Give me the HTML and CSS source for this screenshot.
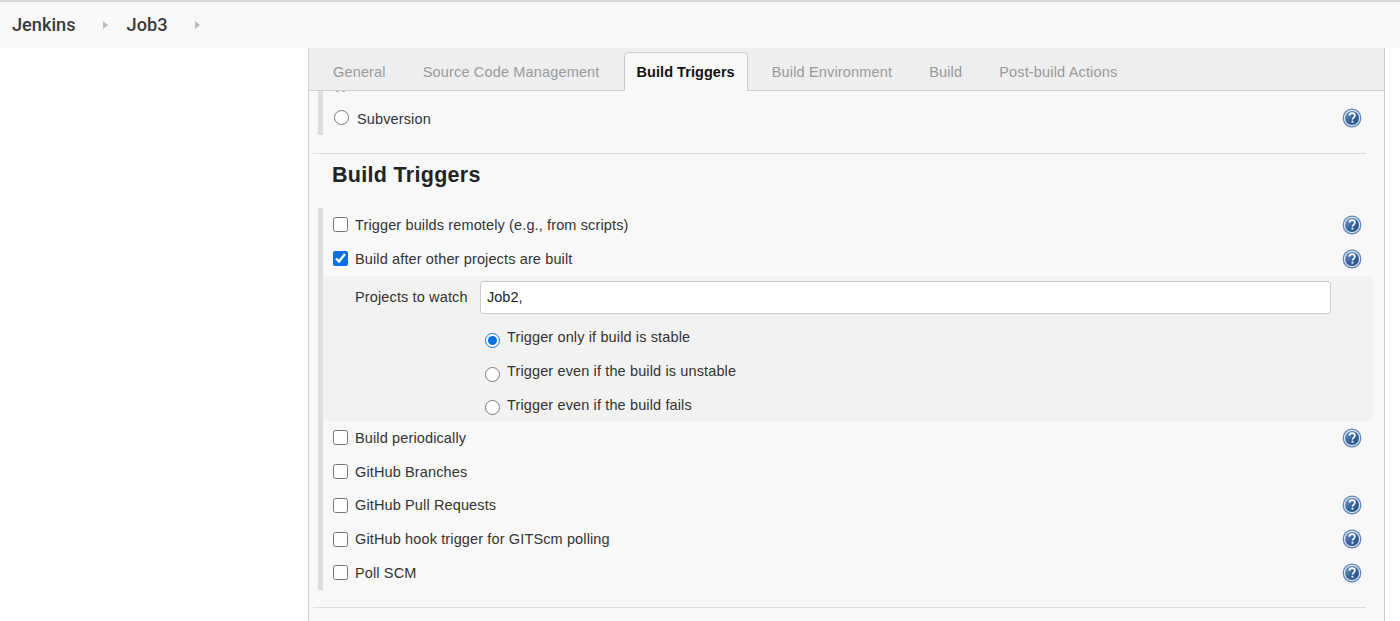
FILE: index.html
```html
<!DOCTYPE html>
<html lang="en">
<head>
<meta charset="utf-8">
<title>Job3 Config</title>
<link rel="stylesheet" href="styles.css">
</head>
<body>
<svg class="defs" width="0" height="0" aria-hidden="true">
  <defs>
    <linearGradient id="hg" x1="0" y1="0" x2="1" y2="1">
      <stop offset="0" stop-color="#7f9fc8"/>
      <stop offset="0.55" stop-color="#2f5f9c"/>
      <stop offset="1" stop-color="#2a4f86"/>
    </linearGradient>
    <symbol id="help" viewBox="0 0 20 20">
      <circle cx="10" cy="10" r="9.4" fill="#5f83b3"/>
      <circle cx="10" cy="10" r="8.2" fill="#dfe8f2"/>
      <circle cx="10" cy="10" r="7" fill="url(#hg)"/>
      <path d="M7.3 7.6c.2-1.6 1.3-2.4 2.8-2.4 1.6 0 2.8 1 2.8 2.4 0 1.1-.6 1.7-1.4 2.3-.7.5-1 .9-1 1.7" fill="none" stroke="#fff" stroke-width="1.7"/>
      <rect x="9.5" y="12.7" width="1.9" height="1.9" fill="#fff"/>
    </symbol>
  </defs>
</svg>
<header class="topbar">
  <a class="crumb">Jenkins</a><span class="arrow"></span>
  <a class="crumb">Job3</a><span class="arrow"></span>
</header>
<div class="layout">
  <aside class="sidebar"></aside>
  <main class="panel">
    <nav class="tabs">
      <span class="tab">General</span>
      <span class="tab">Source Code Management</span>
      <span class="tab active">Build Triggers</span>
      <span class="tab">Build Environment</span>
      <span class="tab">Build</span>
      <span class="tab">Post-build Actions</span>
    </nav>
    <section class="scm group">
      <div class="clip"><input type="radio" name="scm"></div>
      <div class="row radio-row">
        <label class="opt"><input type="radio" name="scm"><span>Subversion</span></label>
        <svg class="help"><use href="#help"/></svg>
      </div>
    </section>
    <hr class="sep first">
    <h2 class="title">Build Triggers</h2>
    <section class="group triggers">
      <div class="row">
        <label class="opt"><input type="checkbox"><span>Trigger builds remotely (e.g., from scripts)</span></label>
        <svg class="help"><use href="#help"/></svg>
      </div>
      <div class="row">
        <label class="opt"><input type="checkbox" checked><span>Build after other projects are built</span></label>
        <svg class="help"><use href="#help"/></svg>
      </div>
      <div class="nested">
        <div class="watch">
          <span class="watch-label">Projects to watch</span>
          <input class="text" type="text" value="Job2,">
        </div>
        <label class="sub"><input type="radio" name="t" checked><span>Trigger only if build is stable</span></label>
        <label class="sub"><input type="radio" name="t"><span>Trigger even if the build is unstable</span></label>
        <label class="sub"><input type="radio" name="t"><span>Trigger even if the build fails</span></label>
      </div>
      <div class="row">
        <label class="opt"><input type="checkbox"><span>Build periodically</span></label>
        <svg class="help"><use href="#help"/></svg>
      </div>
      <div class="row">
        <label class="opt"><input type="checkbox"><span>GitHub Branches</span></label>
      </div>
      <div class="row">
        <label class="opt"><input type="checkbox"><span>GitHub Pull Requests</span></label>
        <svg class="help"><use href="#help"/></svg>
      </div>
      <div class="row">
        <label class="opt"><input type="checkbox"><span>GitHub hook trigger for GITScm polling</span></label>
        <svg class="help"><use href="#help"/></svg>
      </div>
      <div class="row">
        <label class="opt"><input type="checkbox"><span>Poll SCM</span></label>
        <svg class="help"><use href="#help"/></svg>
      </div>
    </section>
    <hr class="sep last">
  </main>
</div>
</body>
</html>
```
FILE: styles.css
```css
* { box-sizing: border-box; }
html, body { margin: 0; height: 621px; overflow: hidden; background: #fff; }
body { font-family: "Liberation Sans", Arial, sans-serif; font-size: 14px; color: #333; }
.defs { position: absolute; }
.topbar {
  height: 48px;
  border-top: 2px solid #d6d6d6;
  background: #f8f8f8;
  display: flex;
  align-items: center;
  padding-left: 12px;
  padding-bottom: 1px;
}
.crumb { font-family: Roboto, sans-serif; font-weight: 500; font-size: 18.2px; color: #3a3a3a; }
.arrow {
  width: 0; height: 0;
  margin: 0 19px 0 27px;
  border-left: 5px solid #bbb;
  border-top: 4px solid transparent;
  border-bottom: 4px solid transparent;
}
.layout { display: flex; height: 573px; }
.sidebar { width: 308px; flex: none; background: #fff; }
.panel {
  width: 1077px;
  flex: none;
  background: #f8f8f8;
  border-left: 1px solid #ccc;
  border-right: 1px solid #ccc;
  padding-left: 5px;
  overflow: hidden;
}
.tabs {
  display: flex;
  align-items: flex-end;
  height: 43px;
  margin-left: -5px;
  padding-left: 11px;
  background: #eee;
  border-bottom: 1px solid #ccc;
  position: relative;
  z-index: 1;
  gap: 11px;
}
.tab {
  height: 39px;
  margin-bottom: -1px;
  padding: 0 12px 1px;
  display: flex;
  align-items: center;
  font-size: 14.5px;
  letter-spacing: 0.16px;
  color: #999;
  white-space: nowrap;
  border: 1px solid transparent;
  border-bottom: 0;
}
.tab.active {
  background: #f8f8f8;
  border-color: #ccc;
  border-radius: 5px 5px 0 0;
  font-weight: 700;
  color: #111;
  letter-spacing: 0.05px;
}
.group { margin-left: 4px; border-left: 5px solid #ddd; }
.scm { height: 44px; }
.clip { height: 1px; overflow: hidden; position: relative; }
.clip input { position: absolute; left: 10px; top: -13px; margin: 0; width: 15px; height: 15px; }
.row {
  height: 33.75px;
  display: flex;
  align-items: center;
  justify-content: space-between;
  padding-left: 10px;
  padding-right: 13.5px;
  width: 1052px;
}
.radio-row { margin-top: 9px; }
.opt { display: flex; align-items: center; letter-spacing: 0.13px; font-size: 14.5px; }
.opt input { margin: 0 7px 0 0; width: 15px; height: 15px; accent-color: #0a6fe0; flex: none; }
.radio-row .opt input { margin: 0 8px 0 1px; }
.radio-row .opt span { padding-top: 2px; }
.help { width: 20px; height: 20px; flex: none; }
.sep { border: 0; border-top: 1px solid #ddd; margin: 0 0 0 -1px; width: 1053px; }
.sep.first { margin-top: 18px; }
.sep.last { margin-top: 17px; }
.title { margin: 0; height: 54px; padding: 7px 0 0 18px; font-size: 21.5px; line-height: 28px; letter-spacing: 0.3px; color: #222; font-weight: 700; }
.triggers { height: 382px; }
.nested {
  background: #f2f2f2;
  width: 1050px;
  height: 145.6px;
  padding-top: 5px;
}
.watch { display: flex; align-items: center; height: 33px; padding-left: 32px; margin-bottom: 7px; }
.watch-label { width: 125px; flex: none; font-size: 14.5px; letter-spacing: 0.13px; }
.text {
  width: 851px;
  height: 33px;
  border: 1px solid #ccc;
  border-radius: 3px;
  background: #fff;
  padding: 0 6px;
  font: 14.5px "Liberation Sans", Arial, sans-serif;
  color: #222;
}
.sub {
  display: flex;
  height: 33.75px;
  padding-left: 162px;
  font-size: 14.5px;
  letter-spacing: 0.13px;
  align-items: center;
}
.sub input { margin: 6px 7px 0 0; width: 15px; height: 15px; accent-color: #0a6fe0; flex: none; }
```
